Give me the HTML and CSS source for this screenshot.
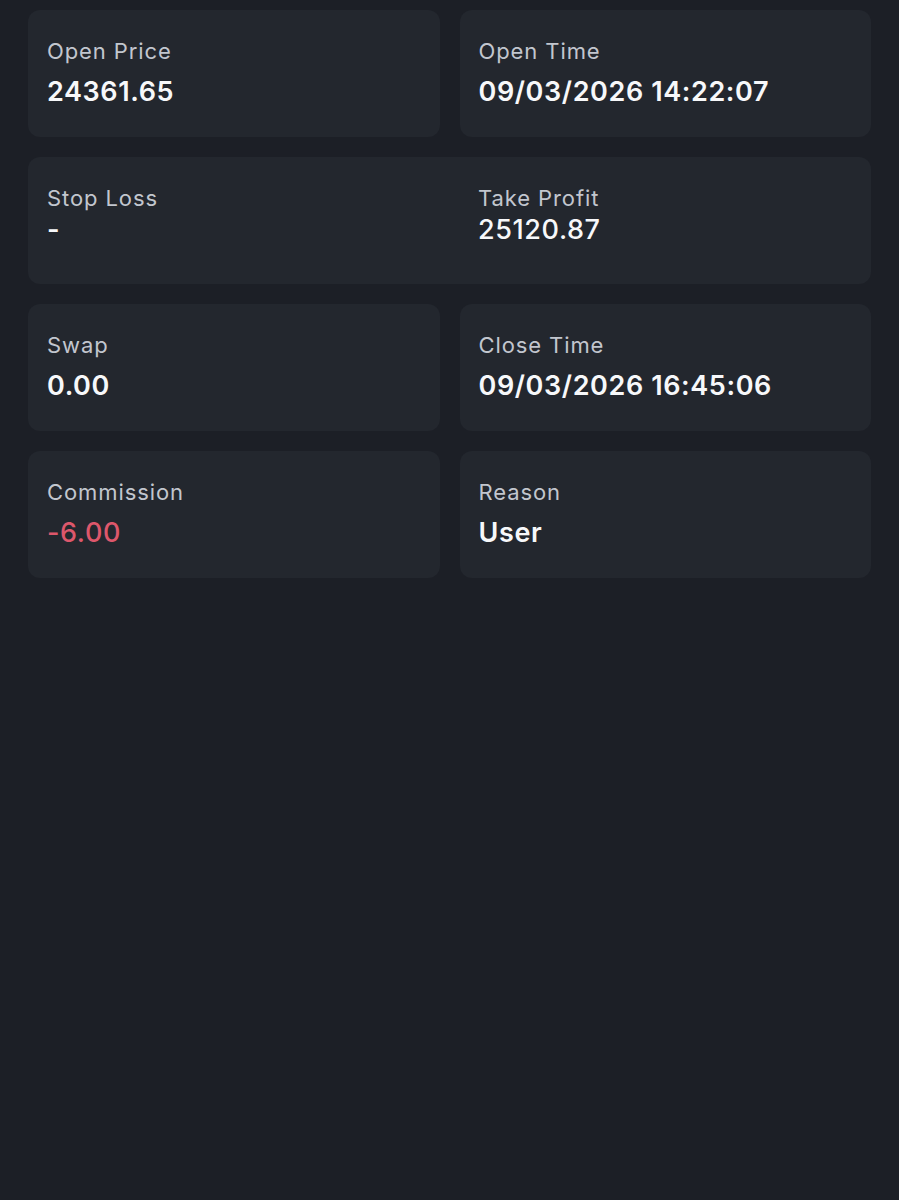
FILE: index.html
```html
<!DOCTYPE html>
<html lang="en">
<head>
<meta charset="utf-8">
<title>Trade details</title>
<link rel="stylesheet" href="styles.css">
</head>
<body>
<main class="grid">
  <section class="card">
    <div class="label">Open Price</div>
    <div class="value">24361.65</div>
  </section>
  <section class="card">
    <div class="label">Open Time</div>
    <div class="value">09/03/2026 14:22:07</div>
  </section>
  <section class="card card-wide">
    <div class="pair">
      <div class="label">Stop Loss</div>
      <div class="value tight">-</div>
    </div>
    <div class="pair">
      <div class="label">Take Profit</div>
      <div class="value tight medium">25120.87</div>
    </div>
  </section>
  <section class="card">
    <div class="label">Swap</div>
    <div class="value">0.00</div>
  </section>
  <section class="card">
    <div class="label">Close Time</div>
    <div class="value">09/03/2026 16:45:06</div>
  </section>
  <section class="card">
    <div class="label">Commission</div>
    <div class="value negative">-6.00</div>
  </section>
  <section class="card">
    <div class="label">Reason</div>
    <div class="value">User</div>
  </section>
</main>
</body>
</html>
```
FILE: styles.css
```css
html, body {
  margin: 0;
  padding: 0;
  background: #1c1f26;
  min-height: 100%;
}
body {
  font-family: Inter, "Noto Sans", "Liberation Sans", sans-serif;
  color: #f4f5f7;
  height: 1200px;
}
.grid {
  display: grid;
  grid-template-columns: 1fr 1fr;
  column-gap: 20px;
  row-gap: 20px;
  padding: 10px 28px 0;
}
.card {
  background: #23272e;
  border-radius: 12px;
  min-height: 127px;
  box-sizing: border-box;
  padding: 27px 19px 20px;
}
.card-wide {
  grid-column: 1 / -1;
  display: grid;
  grid-template-columns: 1fr 1fr;
  column-gap: 57px;
}
.label {
  font-size: 22px;
  line-height: 28px;
  letter-spacing: 0.9px;
  color: #c2c6ce;
  font-weight: 400;
}
.value {
  margin-top: 10px;
  font-size: 27px;
  line-height: 34px;
  letter-spacing: 0.6px;
  font-weight: 600;
  color: #f7f8fa;
}
.value.tight {
  margin-top: 1px;
}
.value.medium {
  font-weight: 500;
}
.value.negative {
  color: #dd576b;
  font-weight: 500;
}
```
